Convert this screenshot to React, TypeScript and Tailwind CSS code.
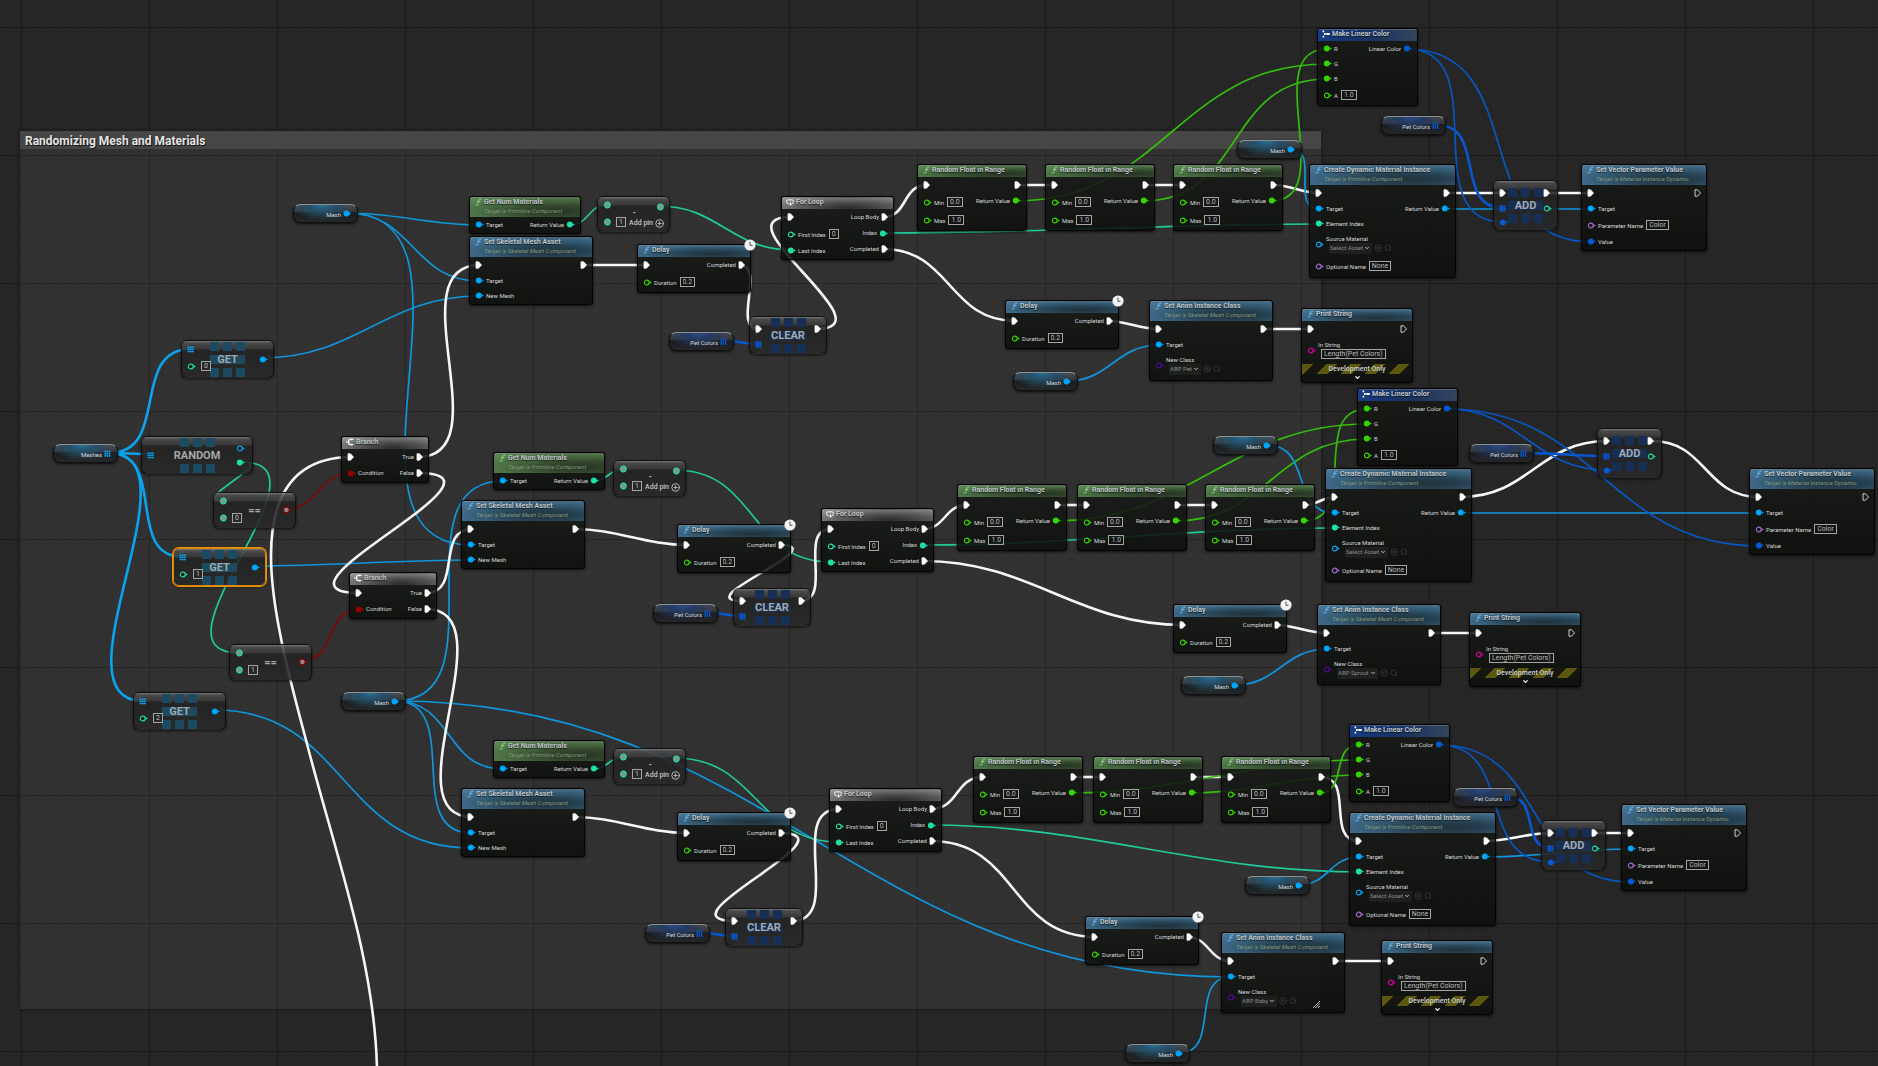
import type { ReactNode } from "react"
import clsx from "clsx"
import { ChevronDown, CircleArrowLeft, CirclePlus, Search } from "lucide-react"

type Kind =
  | "mesh"
  | "meshes"
  | "colors"
  | "get"
  | "random"
  | "equal"
  | "branch"
  | "numMaterials"
  | "setSkeletal"
  | "subtract"
  | "delay"
  | "clear"
  | "forLoop"
  | "randomFloat"
  | "makeColor"
  | "createMaterial"
  | "add"
  | "setVector"
  | "setAnim"
  | "printString"

type Tone = "blue" | "green" | "gray" | "navy"

type GraphNode = {
  id: string
  kind: Kind
  x: number
  y: number
  value?: string
  selected?: boolean
}

const nodes: GraphNode[] = [
  // arrays and branches
  { id: "meshes", kind: "meshes", x: 53, y: 444 },
  { id: "get0", kind: "get", x: 181, y: 340, value: "0" },
  { id: "random", kind: "random", x: 141, y: 436 },
  { id: "equal0", kind: "equal", x: 213, y: 492, value: "0" },
  { id: "get1", kind: "get", x: 173, y: 548, value: "1", selected: true },
  { id: "equal1", kind: "equal", x: 229, y: 644, value: "1" },
  { id: "get2", kind: "get", x: 133, y: 692, value: "2" },
  { id: "branch1", kind: "branch", x: 341, y: 436 },
  { id: "branch2", kind: "branch", x: 349, y: 572 },
  { id: "meshTop", kind: "mesh", x: 293, y: 204 },
  { id: "meshLow", kind: "mesh", x: 341, y: 692 },

  // pet
  { id: "num1", kind: "numMaterials", x: 469, y: 196 },
  { id: "skel1", kind: "setSkeletal", x: 469, y: 236 },
  { id: "sub1", kind: "subtract", x: 597, y: 196 },
  { id: "delay1", kind: "delay", x: 637, y: 244 },
  { id: "colors1", kind: "colors", x: 669, y: 332 },
  { id: "clear1", kind: "clear", x: 749, y: 316 },
  { id: "loop1", kind: "forLoop", x: 781, y: 196 },
  { id: "rf1a", kind: "randomFloat", x: 917, y: 164 },
  { id: "rf1b", kind: "randomFloat", x: 1045, y: 164 },
  { id: "rf1c", kind: "randomFloat", x: 1173, y: 164 },
  { id: "wait1", kind: "delay", x: 1005, y: 300 },
  { id: "meshAnim1", kind: "mesh", x: 1013, y: 372 },
  { id: "anim1", kind: "setAnim", x: 1149, y: 300, value: "ABP Pet" },
  { id: "print1", kind: "printString", x: 1301, y: 308 },
  { id: "make1", kind: "makeColor", x: 1317, y: 28 },
  { id: "meshMat1", kind: "mesh", x: 1237, y: 140 },
  { id: "colorsAdd1", kind: "colors", x: 1381, y: 116 },
  { id: "create1", kind: "createMaterial", x: 1309, y: 164 },
  { id: "add1", kind: "add", x: 1493, y: 180 },
  { id: "vector1", kind: "setVector", x: 1581, y: 164 },

  // sprout
  { id: "num2", kind: "numMaterials", x: 493, y: 452 },
  { id: "skel2", kind: "setSkeletal", x: 461, y: 500 },
  { id: "sub2", kind: "subtract", x: 613, y: 460 },
  { id: "delay2", kind: "delay", x: 677, y: 524 },
  { id: "colors2", kind: "colors", x: 653, y: 604 },
  { id: "clear2", kind: "clear", x: 733, y: 588 },
  { id: "loop2", kind: "forLoop", x: 821, y: 508 },
  { id: "rf2a", kind: "randomFloat", x: 957, y: 484 },
  { id: "rf2b", kind: "randomFloat", x: 1077, y: 484 },
  { id: "rf2c", kind: "randomFloat", x: 1205, y: 484 },
  { id: "wait2", kind: "delay", x: 1173, y: 604 },
  { id: "meshAnim2", kind: "mesh", x: 1181, y: 676 },
  { id: "anim2", kind: "setAnim", x: 1317, y: 604, value: "ABP Sprout" },
  { id: "print2", kind: "printString", x: 1469, y: 612 },
  { id: "make2", kind: "makeColor", x: 1357, y: 388 },
  { id: "meshMat2", kind: "mesh", x: 1213, y: 436 },
  { id: "colorsAdd2", kind: "colors", x: 1469, y: 444 },
  { id: "create2", kind: "createMaterial", x: 1325, y: 468 },
  { id: "add2", kind: "add", x: 1597, y: 428 },
  { id: "vector2", kind: "setVector", x: 1749, y: 468 },

  // baby
  { id: "num3", kind: "numMaterials", x: 493, y: 740 },
  { id: "skel3", kind: "setSkeletal", x: 461, y: 788 },
  { id: "sub3", kind: "subtract", x: 613, y: 748 },
  { id: "delay3", kind: "delay", x: 677, y: 812 },
  { id: "colors3", kind: "colors", x: 645, y: 924 },
  { id: "clear3", kind: "clear", x: 725, y: 908 },
  { id: "loop3", kind: "forLoop", x: 829, y: 788 },
  { id: "rf3a", kind: "randomFloat", x: 973, y: 756 },
  { id: "rf3b", kind: "randomFloat", x: 1093, y: 756 },
  { id: "rf3c", kind: "randomFloat", x: 1221, y: 756 },
  { id: "wait3", kind: "delay", x: 1085, y: 916 },
  { id: "meshAnim3", kind: "mesh", x: 1125, y: 1044 },
  { id: "anim3", kind: "setAnim", x: 1221, y: 932, value: "ABP Baby" },
  { id: "print3", kind: "printString", x: 1381, y: 940 },
  { id: "make3", kind: "makeColor", x: 1349, y: 724 },
  { id: "meshMat3", kind: "mesh", x: 1245, y: 876 },
  { id: "colorsAdd3", kind: "colors", x: 1453, y: 788 },
  { id: "create3", kind: "createMaterial", x: 1349, y: 812 },
  { id: "add3", kind: "add", x: 1541, y: 820 },
  { id: "vector3", kind: "setVector", x: 1621, y: 804 },
]

// pin centres, measured from the node's top left corner
const pins: Record<Kind, Record<string, [number, number]>> = {
  mesh: { out: [54, 9] },
  meshes: { out: [56, 9] },
  colors: { out: [56, 9] },
  get: { array: [10, 9], out: [82, 18] },
  random: { array: [10, 18], index: [101, 26] },
  equal: { a: [10, 9], out: [72, 17] },
  branch: { exec: [11, 21], condition: [11, 37], yes: [77, 21], no: [77, 37] },
  numMaterials: { target: [10, 29], out: [101, 29] },
  setSkeletal: { exec: [11, 29], target: [10, 45], mesh: [10, 60], then: [113, 29] },
  subtract: { a: [10, 9], out: [62, 10] },
  delay: { exec: [11, 21], then: [102, 21] },
  clear: { exec: [10, 13], array: [10, 28], then: [67, 13] },
  forLoop: { exec: [10, 21], last: [10, 54], body: [102, 21], index: [102, 37], done: [102, 53] },
  randomFloat: { exec: [10, 21], out: [98, 37], then: [100, 21] },
  makeColor: { r: [10, 21], g: [10, 36], b: [10, 51], out: [90, 21] },
  createMaterial: { exec: [10, 29], target: [10, 45], element: [10, 60], then: [136, 29], out: [136, 45] },
  add: { exec: [10, 13], array: [10, 28], item: [10, 42], then: [55, 13] },
  setVector: { exec: [10, 29], target: [10, 45], value: [10, 78] },
  setAnim: { exec: [10, 29], target: [10, 45], then: [114, 29] },
  printString: { exec: [10, 21] },
}

type WireType = "exec" | "object" | "objects" | "int" | "float" | "color" | "colors" | "bool"

const wireStyle: Record<WireType, { color: string; width: number }> = {
  exec: { color: "#f6f6f6", width: 2.6 },
  object: { color: "#0f96dd", width: 1.7 },
  objects: { color: "#0aa3f0", width: 2.6 },
  int: { color: "#1fcb9b", width: 1.7 },
  float: { color: "#33bd0c", width: 1.7 },
  color: { color: "#0757c4", width: 1.7 },
  colors: { color: "#0757cf", width: 2.6 },
  bool: { color: "#850505", width: 1.7 },
}

const wires: [WireType, string, string][] = [
  ["objects", "meshes.out", "get0.array"],
  ["objects", "meshes.out", "random.array"],
  ["objects", "meshes.out", "get1.array"],
  ["objects", "meshes.out", "get2.array"],
  ["int", "random.index", "equal0.a"],
  ["int", "random.index", "equal1.a"],
  ["bool", "equal0.out", "branch1.condition"],
  ["bool", "equal1.out", "branch2.condition"],
  ["object", "meshTop.out", "num1.target"],
  ["object", "meshTop.out", "skel1.target"],
  ["object", "meshTop.out", "skel2.target"],
  ["object", "get0.out", "skel1.mesh"],
  ["object", "get1.out", "skel2.mesh"],
  ["object", "get2.out", "skel3.mesh"],
  ["object", "meshLow.out", "num2.target"],
  ["object", "meshLow.out", "num3.target"],
  ["object", "meshLow.out", "skel3.target"],
  ["object", "meshLow.out", "anim3.target"],
  ["exec", "branch1.yes", "skel1.exec"],
  ["exec", "branch1.no", "branch2.exec"],
  ["exec", "branch2.yes", "skel2.exec"],
  ["exec", "branch2.no", "skel3.exec"],
  ...["1", "2", "3"].flatMap((n): [WireType, string, string][] => [
    ["int", `num${n}.out`, `sub${n}.a`],
    ["int", `sub${n}.out`, `loop${n}.last`],
    ["exec", `skel${n}.then`, `delay${n}.exec`],
    ["exec", `delay${n}.then`, `clear${n}.exec`],
    ["colors", `colors${n}.out`, `clear${n}.array`],
    ["exec", `clear${n}.then`, `loop${n}.exec`],
    ["exec", `loop${n}.body`, `rf${n}a.exec`],
    ["int", `loop${n}.index`, `create${n}.element`],
    ["exec", `loop${n}.done`, `wait${n}.exec`],
    ["exec", `rf${n}a.then`, `rf${n}b.exec`],
    ["exec", `rf${n}b.then`, `rf${n}c.exec`],
    ["exec", `rf${n}c.then`, `create${n}.exec`],
    ["float", `rf${n}a.out`, `make${n}.g`],
    ["float", `rf${n}b.out`, `make${n}.b`],
    ["float", `rf${n}c.out`, `make${n}.r`],
    ["object", `meshMat${n}.out`, `create${n}.target`],
    ["exec", `create${n}.then`, `add${n}.exec`],
    ["exec", `add${n}.then`, `vector${n}.exec`],
    ["object", `create${n}.out`, `vector${n}.target`],
    ["colors", `colorsAdd${n}.out`, `add${n}.array`],
    ["color", `make${n}.out`, `add${n}.item`],
    ["color", `make${n}.out`, `vector${n}.value`],
    ["exec", `wait${n}.then`, `anim${n}.exec`],
    ["object", `meshAnim${n}.out`, `anim${n}.target`],
    ["exec", `anim${n}.then`, `print${n}.exec`],
  ]),
]

function pinPoint(ref: string): [number, number] {
  const [id, pin] = ref.split(".")
  const node = nodes.find((n) => n.id === id)!
  const [dx, dy] = pins[node.kind][pin]
  return [node.x + dx, node.y + dy]
}

function wirePath(from: string, to: string) {
  const [x1, y1] = pinPoint(from)
  const [x2, y2] = pinPoint(to)
  const dx = Math.abs(x2 - x1)
  const dy = Math.abs(y2 - y1)
  // wires that run backwards get a wider loop
  const h =
    x2 >= x1 ? (dx + dy) / 3 : 0.85 * Math.min(dx, 200) + Math.min(dy, 200) / 2
  return `M${x1} ${y1}C${x1 + h} ${y1} ${x2 - h} ${y2} ${x2} ${y2}`
}

function Wires() {
  return (
    <svg className="pointer-events-none absolute inset-0 size-full" fill="none" aria-hidden="true">
      {wires.map(([type, from, to]) => (
        <path
          key={from + to}
          d={wirePath(from, to)}
          stroke={wireStyle[type].color}
          strokeWidth={wireStyle[type].width}
        />
      ))}
      <path
        d="M352 457C290 457 271 500 271 556C271 610 290 680 306 740C334 850 375 960 377 1070"
        stroke={wireStyle.exec.color}
        strokeWidth={wireStyle.exec.width}
      />
    </svg>
  )
}

/* pins */

const pinColor = {
  object: "text-[#00a6f8]",
  int: "text-[#1fe0ab]",
  float: "text-[#36d400]",
  color: "text-[#0659d6]",
  bool: "text-[#960000]",
  name: "text-[#a566cf]",
  string: "text-[#d6009c]",
  class: "text-[#4b0c9c]",
}

type PinType = keyof typeof pinColor

function Exec({ open }: { open?: boolean }) {
  return (
    <svg viewBox="0 0 7 8" className="h-2 w-[7px] shrink-0 text-white" aria-hidden="true">
      <path
        d="M1 .8H3.5L6.5 4L3.5 7.2H1Z"
        fill={open ? "none" : "currentColor"}
        stroke="currentColor"
        strokeWidth=".8"
        strokeLinejoin="round"
      />
    </svg>
  )
}

function Pin({ type, open }: { type: PinType; open?: boolean }) {
  return (
    <svg viewBox="0 0 9 7" className={clsx("h-[7px] w-[9px] shrink-0", pinColor[type])} aria-hidden="true">
      <circle
        cx="3.8"
        cy="3.5"
        r={open ? 2.4 : 2.9}
        fill={open ? "#0b0d0b" : "currentColor"}
        stroke="currentColor"
        strokeWidth={open ? 1.2 : 0}
      />
      <path d="M6.5 2L8.8 3.5L6.5 5Z" fill="currentColor" />
    </svg>
  )
}

// wildcard pins of the maths nodes
function RingPin({ type }: { type: PinType }) {
  return (
    <svg viewBox="0 0 8 8" className={clsx("size-2 shrink-0", pinColor[type])} aria-hidden="true">
      <circle cx="4.4" cy="4" r="2.8" fill="#8c8c8c" stroke="currentColor" strokeWidth="1.2" />
    </svg>
  )
}

function ArrayPin({ type, shape = "cols" }: { type: PinType; shape?: "cols" | "rows" | "grid" }) {
  return (
    <svg viewBox="0 0 7 7" className={clsx("size-[7px] shrink-0", pinColor[type])} aria-hidden="true">
      {shape === "grid" && <rect x=".5" y=".5" width="6" height="6" fill="currentColor" opacity=".7" />}
      {[0.5, 2.7, 4.9].map((x) =>
        [0.5, 2.7, 4.9].map((y) => (
          <rect
            key={`${x}-${y}`}
            x={x}
            y={y}
            width={shape === "rows" ? 2 : 1.4}
            height={shape === "cols" ? 2 : 1.4}
            fill="currentColor"
          />
        ))
      )}
    </svg>
  )
}

/* node parts */

function FunctionIcon({ tone }: { tone: Tone }) {
  return (
    <svg
      viewBox="0 0 8 9"
      className={clsx("h-2 w-[7px]", tone === "green" ? "text-[#8fe07f]" : "text-[#6cbcf0]")}
      fill="none"
      stroke="currentColor"
      strokeLinecap="round"
      aria-hidden="true"
    >
      <path d="M7 1.4C5.4 .4 4.7 1.6 4.3 3.6L3.7 6.2C3.3 8 2.3 8.6 1 7.7" strokeWidth="1.1" />
      <path d="M2.4 4H6" strokeWidth=".9" />
    </svg>
  )
}

function BranchIcon() {
  return (
    <svg viewBox="0 0 8 8" className="size-2 shrink-0 text-white" fill="none" stroke="currentColor" aria-hidden="true">
      <path d="M0 4H2.6M6 1.4H4.4C3 1.4 2.6 2.4 2.6 4S3 6.6 4.4 6.6H6" strokeWidth="1.2" />
      <path d="M5.6 .2L7.8 1.4L5.6 2.6ZM5.6 5.4L7.8 6.6L5.6 7.8Z" fill="currentColor" stroke="none" />
    </svg>
  )
}

function LoopIcon() {
  return (
    <svg viewBox="0 0 9 8" className="h-[7px] w-2 shrink-0 text-white" fill="none" stroke="currentColor" aria-hidden="true">
      <path d="M3 5.4H2C1.2 5.4 .8 5 .8 4.2V2.2C.8 1.4 1.2 1 2 1H7C7.8 1 8.2 1.4 8.2 2.2V4.2C8.2 5 7.8 5.4 7 5.4" strokeWidth="1.1" />
      <path d="M5.2 3.2V6.6M3.6 5.4L5.2 7.2L6.8 5.4" strokeWidth="1.1" />
    </svg>
  )
}

function MakeIcon() {
  return (
    <svg viewBox="0 0 8 8" className="size-2 shrink-0 text-white" fill="currentColor" aria-hidden="true">
      <path d="M.6 .6H2.2V2.2H.6ZM2 3.1H3.8V4.9H2ZM.6 5.8H2.2V7.4H.6ZM4.4 3H7.8V5H4.4Z" />
    </svg>
  )
}

const headerTone: Record<Tone, string> = {
  blue: "bg-[radial-gradient(ellipse_at_68%_70%,#22313a_0%,#264253_30%,#3a637f_65%,#4a7b9d_100%)]",
  green: "bg-[radial-gradient(ellipse_at_80%_70%,#263325_0%,#354a2e_32%,#4c7045_65%,#5f8c5b_100%)]",
  gray: "bg-[radial-gradient(ellipse_at_60%_90%,#2b2b2b_0%,#505050_40%,#828282_80%,#a0a0a0_100%)]",
  navy: "bg-[linear-gradient(to_right,#173c80_0%,#173362_50%,#33455c_100%)]",
}

type NodeProps = {
  title: string
  subtitle?: string
  tone: Tone
  icon?: ReactNode
  size: string
  left: ReactNode
  right?: ReactNode
  footer?: ReactNode
}

function TitledNode({ title, subtitle, tone, icon, size, left, right, footer }: NodeProps) {
  return (
    <section
      className={clsx(
        "flex flex-col overflow-hidden rounded-[3px] border border-black/80 bg-[linear-gradient(to_bottom,rgb(24_27_24/0.88),rgb(12_15_12/0.88))] shadow-[0_1px_3px_rgb(0_0_0/0.7)]",
        size
      )}
    >
      <header
        className={clsx(
          "flex shrink-0 gap-[2px] border-t border-white/20 pl-1",
          subtitle ? "h-5" : "h-3",
          headerTone[tone]
        )}
      >
        <span className="flex size-2 items-center justify-center">
          {icon ?? <FunctionIcon tone={tone} />}
        </span>
        <div className="whitespace-nowrap">
          <h2 className="text-[7px] leading-[8px] font-bold text-[#c0c6c9] [text-shadow:0_1px_1px_rgb(0_0_0/0.7)]">
            {title}
          </h2>
          {subtitle && (
            <p className="text-[6px] leading-[10px] text-[#84997a] italic">{subtitle}</p>
          )}
        </div>
      </header>
      <div className="flex justify-between px-[5px]">
        <div className="flex flex-col items-start">{left}</div>
        <div className="flex flex-col items-end">{right}</div>
      </div>
      {footer}
    </section>
  )
}

function Row({
  children,
  size = "md",
}: {
  children: ReactNode
  size?: "sm" | "md" | "lg" | "xl"
}) {
  return (
    <div
      className={clsx(
        "flex items-center gap-[2px] text-[6px] leading-[8px] whitespace-nowrap text-[#d8d8d8]",
        size === "sm" && "h-[15px]",
        size === "md" && "h-4",
        size === "lg" && "h-[18px]",
        size === "xl" && "h-[26px]"
      )}
    >
      {children}
    </div>
  )
}

function Field({ label, value }: { label: string; value: string }) {
  return (
    <input
      aria-label={label}
      defaultValue={value}
      className="field-sizing-content h-[10px] border border-[#a5a5a5] bg-transparent px-[2px] text-[7px] leading-[8px] text-[#bdbdbd] outline-none"
    />
  )
}

function FieldRow({ type, label, value }: { type: PinType; label: string; value: string }) {
  return (
    <Row size="lg">
      <Pin type={type} open />
      <label className="flex items-center gap-[3px]">
        <span className="pt-px">{label}</span>
        <Field label={label} value={value} />
      </label>
    </Row>
  )
}

function AssetRow({ type, label, value }: { type: PinType; label: string; value: string }) {
  return (
    <Row size="xl">
      <Pin type={type} open />
      <div>
        <label className="block leading-[8px]">
          {label}
          <span className="ml-[3px] flex items-center gap-[2px]">
            <span className="flex h-[11px] items-center bg-[#1e201e] px-px">
              <select className="field-sizing-content appearance-none text-[6px] leading-[8px] text-[#8a8a8a] outline-none">
                <option>{value}</option>
              </select>
              <ChevronDown className="mx-px size-[6px] text-[#c0c0c0]" strokeWidth={4} />
            </span>
            <button type="button" aria-label="Use selected asset">
              <CircleArrowLeft className="size-2 text-[#444444]" />
            </button>
            <button type="button" aria-label="Browse to asset">
              <Search className="size-2 text-[#444444]" />
            </button>
          </span>
        </label>
      </div>
    </Row>
  )
}

function Clock() {
  return (
    <svg viewBox="0 0 12 12" className="absolute -top-[5px] -right-[5px] size-3" aria-hidden="true">
      <circle cx="6" cy="6" r="5.6" fill="#f2f2f2" />
      <path d="M6 2.6V6.4H8.6" fill="none" stroke="#555" strokeWidth="1" />
    </svg>
  )
}

function Tiles({ color, middle = true }: { color: string; middle?: boolean }) {
  return (
    <span className="flex flex-col gap-1">
      {["top", "middle", "bottom"].map((row) => (
        <span key={row} className={clsx("flex h-[9px]", row === "middle" ? "gap-0" : "gap-1")}>
          {row === "middle" ? (
            <span className={clsx("w-[35px]", middle && color)} />
          ) : (
            [0, 1, 2].map((i) => <span key={i} className={clsx("w-[9px]", color)} />)
          )}
        </span>
      ))}
    </span>
  )
}

type CompactProps = {
  title: string
  tiles?: "teal" | "blue"
  size: string
  selected?: boolean
  left: ReactNode
  right: ReactNode
}

function CompactNode({ title, tiles, size, selected, left, right }: CompactProps) {
  return (
    <section
      className={clsx(
        "relative flex justify-between rounded-[6px] border bg-[linear-gradient(to_bottom,rgb(130_130_130/0.88)_0px,rgb(78_78_78/0.88)_2px,rgb(56_56_56/0.88)_8px,rgb(34_34_34/0.88)_9px,rgb(40_40_40/0.88)_100%)] px-[5px] shadow-[0_1px_3px_rgb(0_0_0/0.7)]",
        selected ? "border-[#d9860a] ring-1 ring-[#e8950a]" : "border-black/60",
        size
      )}
    >
      {tiles && (
        <span className="absolute inset-0 flex items-center justify-center">
          <Tiles
            color={tiles === "teal" ? "bg-[#1c4a60]" : "bg-[#182f55]"}
            middle={title !== "RANDOM"}
          />
        </span>
      )}
      <h2 className="absolute inset-0 flex items-center justify-center text-[11px] leading-none font-bold text-[#a3a8aa]">
        {title}
      </h2>
      <div className="relative flex flex-col">{left}</div>
      <div className="relative flex flex-col items-end">{right}</div>
    </section>
  )
}

function VariableNode({ label, tone, pin }: { label: string; tone: "teal" | "blue"; pin: ReactNode }) {
  return (
    <section
      className={clsx(
        "flex h-[19px] w-[65px] items-center justify-end gap-[2px] rounded-[7px] border border-[#101010] border-t-[#8a8f92] pr-[6px] text-[6px] text-[#d8d8d8] shadow-[0_1px_3px_rgb(0_0_0/0.8)]",
        tone === "teal"
          ? "bg-[radial-gradient(ellipse_50%_90%_at_45%_0%,#2b7096_0%,#245069_40%,transparent_100%),linear-gradient(to_bottom,#4a4d4f_0%,#333537_40%,#1b1e20_45%,#25282a_100%)]"
          : "bg-[radial-gradient(ellipse_50%_90%_at_45%_0%,#2a4a88_0%,#243a62_40%,transparent_100%),linear-gradient(to_bottom,#4a4b4f_0%,#333437_40%,#1b1c20_45%,#25262a_100%)]"
      )}
    >
      <span className="pt-px whitespace-nowrap">{label}</span>
      {pin}
    </section>
  )
}

function DotPin() {
  return (
    <svg viewBox="0 0 8 7" className="h-[7px] w-2 shrink-0 text-[#00a6f8]" aria-hidden="true">
      <circle cx="3.5" cy="3.5" r="3" fill="currentColor" />
      <path d="M6 2L8 3.5L6 5Z" fill="currentColor" />
    </svg>
  )
}

/* nodes */

function DelayNode() {
  return (
    <div className="relative">
      <TitledNode
        title="Delay"
        tone="blue"
        size="h-[49px] w-[114px]"
        left={
          <>
            <Row><Exec /></Row>
            <FieldRow type="float" label="Duration" value="0.2" />
          </>
        }
        right={<Row>Completed <Exec /></Row>}
      />
      <Clock />
    </div>
  )
}

function SubtractNode() {
  return (
    <CompactNode
      title=""
      size="h-9 w-[73px]"
      left={
        <>
          <div className="flex h-4 items-center"><RingPin type="int" /></div>
          <div className="flex h-[17px] items-center gap-[5px]">
            <RingPin type="int" />
            <Field label="Subtrahend" value="1" />
          </div>
        </>
      }
      right={
        <>
          <div className="flex h-[19px] items-center gap-5">
            <span className="pt-3 text-[9px] leading-none font-bold text-[#a3a8aa]">-</span>
            <RingPin type="int" />
          </div>
          <button type="button" className="flex h-4 items-center gap-[2px] text-[7px] leading-none font-medium whitespace-nowrap text-[#c4c4c4]">
            Add pin
            <CirclePlus className="size-[9px]" strokeWidth={2.5} />
          </button>
        </>
      }
    />
  )
}

function PrintStringNode() {
  return (
    <TitledNode
      title="Print String"
      tone="blue"
      size="h-[75px] w-[112px]"
      left={
        <>
          <Row><Exec /></Row>
          <Row size="xl">
            <Pin type="string" open />
            <label className="block leading-[8px]">
              In String
              <span className="ml-[3px] flex">
                <Field label="In String" value="Length(Pet Colors)" />
              </span>
            </label>
          </Row>
        </>
      }
      right={<Row><Exec open /></Row>}
      footer={
        <div className="flex flex-col items-center pt-px">
          <p className="h-[10px] w-full bg-[repeating-linear-gradient(135deg,#5c590e_0px,#5c590e_8px,#14160f_8px,#14160f_17px)] text-center text-[7px] leading-[10px] font-medium text-[#d0d0d0]">
            Development Only
          </p>
          <button type="button" aria-label="Show advanced pins">
            <ChevronDown className="size-[7px] text-white" strokeWidth={4} />
          </button>
        </div>
      }
    />
  )
}

function NodeBody({ node }: { node: GraphNode }) {
  const value = node.value ?? ""
  switch (node.kind) {
    case "mesh":
      return <VariableNode label="Mesh" tone="teal" pin={<DotPin />} />
    case "meshes":
      return <VariableNode label="Meshes" tone="teal" pin={<ArrayPin type="object" />} />
    case "colors":
      return <VariableNode label="Pet Colors" tone="blue" pin={<ArrayPin type="color" />} />
    case "get":
      return (
        <CompactNode
          title="GET"
          tiles="teal"
          selected={node.selected}
          size="h-[38px] w-[93px]"
          left={
            <>
              <div className="flex h-[17px] items-center"><ArrayPin type="object" shape="rows" /></div>
              <div className="flex h-4 items-center gap-[5px]">
                <Pin type="int" open />
                <Field label="Index" value={value} />
              </div>
            </>
          }
          right={<div className="flex h-9 items-center"><Pin type="object" /></div>}
        />
      )
    case "random":
      return (
        <CompactNode
          title="RANDOM"
          tiles="teal"
          size="h-[38px] w-[112px]"
          left={<div className="flex h-9 items-center"><ArrayPin type="object" shape="rows" /></div>}
          right={
            <div className="flex h-9 flex-col justify-center gap-[7px] pr-[2px]">
              <Pin type="object" open />
              <Pin type="int" />
            </div>
          }
        />
      )
    case "equal":
      return (
        <CompactNode
          title="=="
          size="h-9 w-[83px]"
          left={
            <>
              <div className="flex h-4 items-center"><RingPin type="int" /></div>
              <div className="flex h-[17px] items-center gap-[5px]">
                <RingPin type="int" />
                <Field label="Compare with" value={value} />
              </div>
            </>
          }
          right={<div className="flex h-[34px] items-center"><RingPin type="bool" /></div>}
        />
      )
    case "branch":
      return (
        <TitledNode
          title="Branch"
          tone="gray"
          icon={<BranchIcon />}
          size="h-[47px] w-[88px]"
          left={
            <>
              <Row><Exec /></Row>
              <Row><Pin type="bool" /> Condition</Row>
            </>
          }
          right={
            <>
              <Row>True <Exec /></Row>
              <Row>False <Exec /></Row>
            </>
          }
        />
      )
    case "numMaterials":
      return (
        <TitledNode
          title="Get Num Materials"
          subtitle="Target is Primitive Component"
          tone="green"
          size="h-[38px] w-[112px]"
          left={<Row size="sm"><Pin type="object" /> Target</Row>}
          right={<Row size="sm">Return Value <Pin type="int" /></Row>}
        />
      )
    case "setSkeletal":
      return (
        <TitledNode
          title="Set Skeletal Mesh Asset"
          subtitle="Target is Skeletal Mesh Component"
          tone="blue"
          size="h-[69px] w-[124px]"
          left={
            <>
              <Row><Exec /></Row>
              <Row size="sm"><Pin type="object" /> Target</Row>
              <Row size="sm"><Pin type="object" /> New Mesh</Row>
            </>
          }
          right={<Row><Exec /></Row>}
        />
      )
    case "subtract":
      return <SubtractNode />
    case "delay":
      return <DelayNode />
    case "clear":
      return (
        <CompactNode
          title="CLEAR"
          tiles="blue"
          size="h-[38px] w-[78px]"
          left={
            <div className="flex flex-col pt-1">
              <div className="flex h-4 items-center"><Exec /></div>
              <div className="flex h-[14px] items-center"><ArrayPin type="color" shape="grid" /></div>
            </div>
          }
          right={<div className="flex h-6 items-center"><Exec /></div>}
        />
      )
    case "forLoop":
      return (
        <TitledNode
          title="For Loop"
          tone="gray"
          icon={<LoopIcon />}
          size="h-[64px] w-[113px]"
          left={
            <>
              <Row><Exec /></Row>
              <FieldRow type="int" label="First Index" value="0" />
              <Row size="sm"><Pin type="int" /> Last Index</Row>
            </>
          }
          right={
            <>
              <Row>Loop Body <Exec /></Row>
              <Row>Index <Pin type="int" /></Row>
              <Row>Completed <Exec /></Row>
            </>
          }
        />
      )
    case "randomFloat":
      return (
        <TitledNode
          title="Random Float in Range"
          tone="green"
          size="h-[67px] w-[110px]"
          left={
            <>
              <Row><Exec /></Row>
              <FieldRow type="float" label="Min" value="0.0" />
              <FieldRow type="float" label="Max" value="1.0" />
            </>
          }
          right={
            <>
              <Row><Exec /></Row>
              <Row size="sm">Return Value <Pin type="float" /></Row>
            </>
          }
        />
      )
    case "makeColor":
      return (
        <TitledNode
          title="Make Linear Color"
          tone="navy"
          icon={<MakeIcon />}
          size="h-[78px] w-[101px]"
          left={
            <>
              <Row size="sm"><Pin type="float" /> R</Row>
              <Row size="sm"><Pin type="float" /> G</Row>
              <Row size="sm"><Pin type="float" /> B</Row>
              <FieldRow type="float" label="A" value="1.0" />
            </>
          }
          right={<Row size="sm">Linear Color <Pin type="color" /></Row>}
        />
      )
    case "createMaterial":
      return (
        <TitledNode
          title="Create Dynamic Material Instance"
          subtitle="Target is Primitive Component"
          tone="blue"
          size="h-[114px] w-[147px]"
          left={
            <>
              <Row><Exec /></Row>
              <Row size="sm"><Pin type="object" /> Target</Row>
              <Row size="sm"><Pin type="int" /> Element Index</Row>
              <AssetRow type="object" label="Source Material" value="Select Asset" />
              <FieldRow type="name" label="Optional Name" value="None" />
            </>
          }
          right={
            <>
              <Row><Exec /></Row>
              <Row size="sm">Return Value <Pin type="object" /></Row>
            </>
          }
        />
      )
    case "add":
      return (
        <CompactNode
          title="ADD"
          tiles="blue"
          size="h-[50px] w-[65px]"
          left={
            <div className="flex flex-col pt-1">
              <div className="flex h-4 items-center"><Exec /></div>
              <div className="flex h-[14px] items-center"><ArrayPin type="color" shape="grid" /></div>
              <div className="flex h-[14px] items-center"><Pin type="color" /></div>
            </div>
          }
          right={
            <div className="flex flex-col pt-1">
              <div className="flex h-4 items-center"><Exec /></div>
              <div className="flex h-[14px] items-center"><Pin type="int" open /></div>
            </div>
          }
        />
      )
    case "setVector":
      return (
        <TitledNode
          title="Set Vector Parameter Value"
          subtitle="Target is Material Instance Dynamic"
          tone="blue"
          size="h-[87px] w-[126px]"
          left={
            <>
              <Row><Exec /></Row>
              <Row size="sm"><Pin type="object" /> Target</Row>
              <FieldRow type="name" label="Parameter Name" value="Color" />
              <Row size="sm"><Pin type="color" /> Value</Row>
            </>
          }
          right={<Row><Exec open /></Row>}
        />
      )
    case "setAnim":
      return (
        <TitledNode
          title="Set Anim Instance Class"
          subtitle="Target is Skeletal Mesh Component"
          tone="blue"
          size="h-[81px] w-[124px]"
          left={
            <>
              <Row><Exec /></Row>
              <Row size="sm"><Pin type="object" /> Target</Row>
              <AssetRow type="class" label="New Class" value={value} />
            </>
          }
          right={<Row><Exec /></Row>}
        />
      )
    case "printString":
      return <PrintStringNode />
  }
}

function CommentBox() {
  return (
    <section className="absolute top-[131px] left-5 h-[878px] w-[1301px] bg-white/5 shadow-[0_0_4px_rgb(0_0_0/0.5)]">
      <h1 className="h-[18px] bg-[#464646] pt-px pl-[5px] text-[12px] leading-[18px] font-bold text-[#e4e4e4] [text-shadow:1px_1px_1px_rgb(0_0_0/0.8)]">
        Randomizing Mesh and Materials
      </h1>
      <svg viewBox="0 0 7 7" className="absolute right-px bottom-px z-10 size-[7px] text-[#c8c8c8]" aria-hidden="true">
        <path d="M0 7L7 0M2.4 7L7 2.4M4.8 7L7 4.8" stroke="currentColor" strokeWidth=".9" />
      </svg>
    </section>
  )
}

export default function App() {
  return (
    <main className="relative min-h-screen overflow-hidden bg-[#262626] font-[Roboto,'Liberation_Sans',sans-serif]">
      <div className="absolute inset-0 bg-[linear-gradient(to_right,#1b1b1b_1px,transparent_1px),linear-gradient(to_bottom,#1b1b1b_1px,transparent_1px),linear-gradient(to_right,#292929_1px,transparent_1px),linear-gradient(to_bottom,#292929_1px,transparent_1px)] bg-size-[128px_128px,128px_128px,16px_16px,16px_16px] bg-position-[21px_27px,21px_27px,5px_11px,5px_11px]" />
      <CommentBox />
      <Wires />
      {nodes.map((node) => (
        <div key={node.id} className="absolute" style={{ left: node.x, top: node.y }}>
          <NodeBody node={node} />
        </div>
      ))}
    </main>
  )
}
